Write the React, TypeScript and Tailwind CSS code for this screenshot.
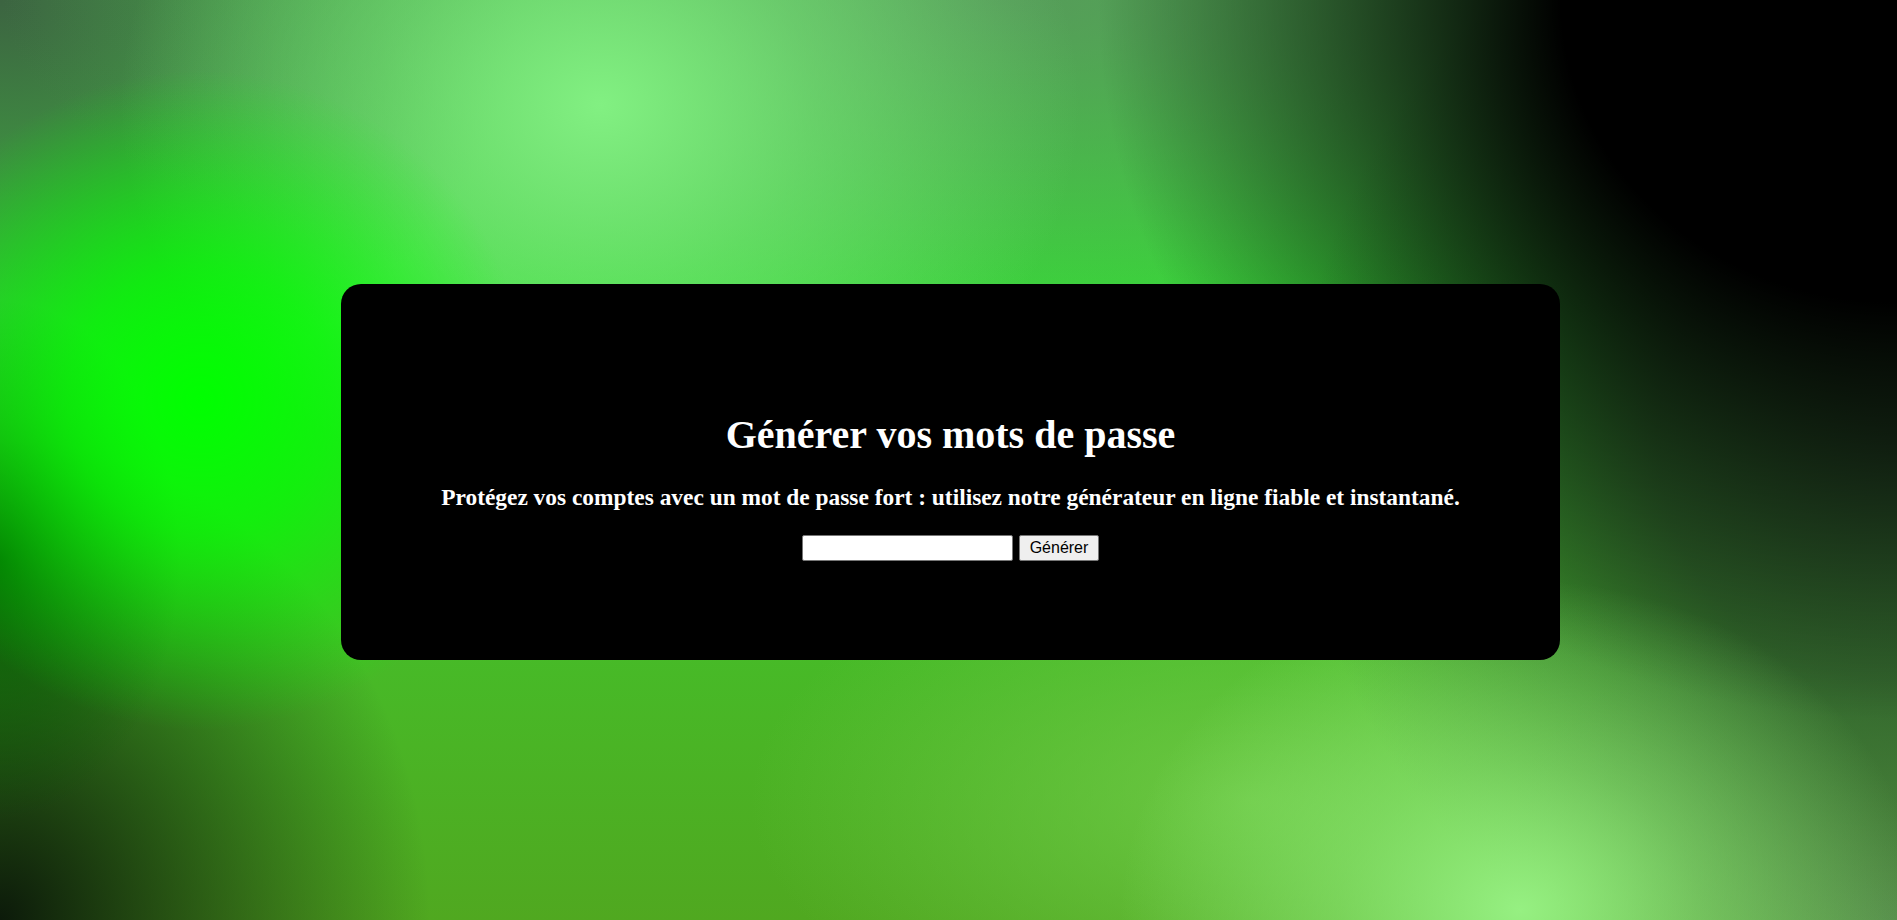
import React from 'react';

// Blurred green backdrop, built from stacked radial gradients (first = top layer)
const backdrop =
  'bg-[radial-gradient(ellipse_330px_330px_at_200px_400px,#00ff00_0%,rgba(0,255,0,0.7)_40%,rgba(0,255,0,0)_100%),radial-gradient(ellipse_480px_400px_at_600px_105px,rgba(130,240,130,1)_0%,rgba(130,240,130,0.5)_45%,rgba(130,240,130,0)_100%),radial-gradient(ellipse_400px_330px_at_1520px_910px,rgba(150,240,130,1)_0%,rgba(150,240,130,0.5)_45%,rgba(150,240,130,0)_100%),radial-gradient(ellipse_800px_720px_at_1897px_0px,#000_0%,#000_42%,rgba(0,0,0,0.55)_68%,rgba(0,0,0,0)_100%),radial-gradient(ellipse_600px_600px_at_1897px_440px,rgba(45,85,45,1)_0%,rgba(45,85,45,0.8)_40%,rgba(45,85,45,0)_100%),radial-gradient(ellipse_420px_330px_at_1897px_920px,rgba(100,160,85,1)_0%,rgba(100,160,85,0)_100%),radial-gradient(ellipse_500px_260px_at_1250px_800px,rgba(115,205,75,0.8)_0%,rgba(115,205,75,0)_100%),radial-gradient(ellipse_180px_260px_at_0px_560px,rgba(0,90,0,0.9)_0%,rgba(0,90,0,0)_100%),radial-gradient(ellipse_430px_480px_at_0px_920px,rgba(12,26,10,1)_0%,rgba(12,26,10,0.6)_40%,rgba(12,26,10,0)_100%),radial-gradient(ellipse_1000px_330px_at_1000px_0px,rgba(90,140,95,0.75)_0%,rgba(90,140,95,0)_100%),radial-gradient(ellipse_520px_420px_at_0px_0px,rgba(60,100,65,1)_0%,rgba(60,100,65,0)_100%),linear-gradient(180deg,#48c848_0%,#38d838_35%,#44c02a_62%,#50a820_100%)]';

export default function App() {
  return (
    <div className={`min-h-screen w-full ${backdrop} pt-[284px]`} style={{ fontFamily: '"Liberation Serif", "Times New Roman", serif' }}>
      <div className="ml-[341px] w-[1219px] h-[376px] bg-black rounded-[20px] flex flex-col items-center pt-[129px]">
        <h1 className="text-white font-bold text-[40px] leading-[44px]">Générer vos mots de passe</h1>
        <h2 className="text-white font-bold text-[23.4px] leading-[28px] mt-[26px]">
          Protégez vos comptes avec un mot de passe fort : utilisez notre générateur en ligne fiable et instantané.
        </h2>
        <div className="flex items-center mt-[24px]">
          <input
            type="text"
            className="w-[211px] h-[26px] bg-white border border-[#767676] rounded-[2px] px-[2px] text-[16px] text-black outline-none"
          />
          <button className="ml-[6px] w-[80px] h-[26px] bg-[#efefef] border border-[#767676] rounded-[2px] text-[16px] text-black leading-none font-['Liberation_Sans',Arial,sans-serif]">
            Générer
          </button>
        </div>
      </div>
    </div>
  );
}
